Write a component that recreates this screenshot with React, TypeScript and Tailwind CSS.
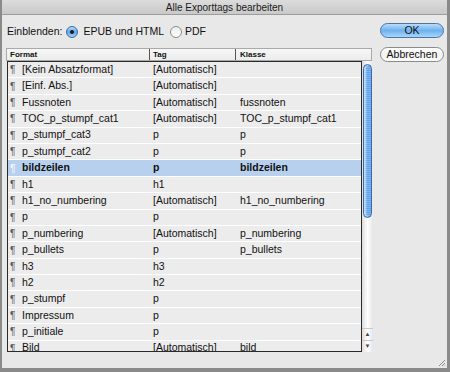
import React from "react";

type Row = { name: string; tag: string; klasse: string; selected?: boolean };

const rows: Row[] = [
  { name: "[Kein Absatzformat]", tag: "[Automatisch]", klasse: "" },
  { name: "[Einf. Abs.]", tag: "[Automatisch]", klasse: "" },
  { name: "Fussnoten", tag: "[Automatisch]", klasse: "fussnoten" },
  { name: "TOC_p_stumpf_cat1", tag: "[Automatisch]", klasse: "TOC_p_stumpf_cat1" },
  { name: "p_stumpf_cat3", tag: "p", klasse: "p" },
  { name: "p_stumpf_cat2", tag: "p", klasse: "p" },
  { name: "bildzeilen", tag: "p", klasse: "bildzeilen", selected: true },
  { name: "h1", tag: "h1", klasse: "" },
  { name: "h1_no_numbering", tag: "[Automatisch]", klasse: "h1_no_numbering" },
  { name: "p", tag: "p", klasse: "" },
  { name: "p_numbering", tag: "[Automatisch]", klasse: "p_numbering" },
  { name: "p_bullets", tag: "p", klasse: "p_bullets" },
  { name: "h3", tag: "h3", klasse: "" },
  { name: "h2", tag: "h2", klasse: "" },
  { name: "p_stumpf", tag: "p", klasse: "" },
  { name: "Impressum", tag: "p", klasse: "" },
  { name: "p_initiale", tag: "p", klasse: "" },
  { name: "Bild", tag: "[Automatisch]", klasse: "bild" },
];

const Radio = ({ checked }: { checked?: boolean }) =>
  checked ? (
    <span className="flex h-[12px] w-[12px] items-center justify-center rounded-full border border-[#3d6a9c] bg-gradient-to-b from-[#b8dcfa] via-[#5aa4e8] to-[#a6d4fa]">
      <span className="block h-[4px] w-[4px] rounded-full bg-[#1b1b1b]" />
    </span>
  ) : (
    <span className="block h-[12px] w-[12px] rounded-full border border-[#8c8c8c] bg-gradient-to-b from-[#ececec] to-white" />
  );

export default function App() {
  return (
    <div
      className="flex h-[372px] w-[450px] flex-col bg-[#8a8a8a] pb-[4px] pl-[2px] pr-[3px] text-[10px] text-[#111]"
      style={{ fontFamily: '"Liberation Sans", Arial, sans-serif' }}
    >
      {/* Title bar */}
      <div className="flex h-[15px] shrink-0 items-center justify-center border-b border-[#9c9c9c] bg-gradient-to-b from-[#dcdcdc] to-[#c9c9c9] text-[10px] text-[#1a1a1a]">
        Alle Exporttags bearbeiten
      </div>

      <div className="relative flex flex-1 bg-[#e8e8e8]">
        {/* Left column */}
        <div className="flex flex-col pl-[4px] pt-[10px]">
          <div className="flex h-[14px] items-center pl-[1px] text-[10.5px]">
            <span>Einblenden:</span>
            <span className="ml-[4px]">
              <Radio checked />
            </span>
            <span className="ml-[5px]">EPUB und HTML</span>
            <span className="ml-[6px]">
              <Radio />
            </span>
            <span className="ml-[3px]">PDF</span>
          </div>

          {/* Header */}
          <div className="mt-[9px] flex h-[13px] w-[366px] border border-[#a9a9a9] bg-gradient-to-b from-[#f7f7f7] to-[#ececec] text-[8px] font-bold">
            <div className="flex w-[143px] items-center border-r border-[#555] pl-[3px]">Format</div>
            <div className="flex w-[86px] items-center border-r border-[#555] pl-[3px]">Tag</div>
            <div className="flex flex-1 items-center pl-[4px]">Klasse</div>
          </div>

          {/* List */}
          <div className="flex h-[291px]">
            <div className="ml-[1px] w-[355px] overflow-hidden border border-[#2a2a2a] bg-[#ececec]">
              {rows.map((r) => (
                <div
                  key={r.name}
                  className={`flex h-[16.4px] items-center border-b border-white text-[10.5px] ${
                    r.selected ? "bg-[#b6d0ee] font-bold" : ""
                  }`}
                >
                  <div className="flex w-[142px] items-center pl-[2px]">
                    <span className={`w-[12px] text-[10px] ${r.selected ? "text-[#eef4fb]" : "text-[#555]"}`}>¶</span>
                    <span>{r.name}</span>
                  </div>
                  <div className="w-[87px] pl-[3px]">{r.tag}</div>
                  <div className="flex-1 pl-[3px]">{r.klasse}</div>
                </div>
              ))}
            </div>

            {/* Scrollbar */}
            <div className="flex w-[11px] flex-col bg-gradient-to-r from-[#dcdcdc] via-white to-[#e6e6e6]">
              <div className="mx-[1px] mt-[3px] h-[154px] rounded-full border border-[#3b6aa8] bg-[repeating-linear-gradient(0deg,#5e9fe6_0px,#5e9fe6_1px,#7fb6f0_1px,#7fb6f0_2px)] shadow-[inset_2px_0_2px_rgba(255,255,255,0.6)]" />
              <div className="flex-1" />
              <div className="flex h-[12px] items-center justify-center border-t border-[#c8c8c8] text-[6px] text-[#444]">▲</div>
              <div className="flex h-[12px] items-center justify-center border-t border-[#c8c8c8] text-[6px] text-[#444]">▼</div>
            </div>
          </div>
        </div>

        {/* Buttons */}
        <div className="ml-[7px] flex flex-col gap-[9px] pt-[8px]">
          <button className="h-[15px] w-[64px] rounded-full border border-[#4a76a6] bg-gradient-to-b from-[#b9dcfa] via-[#6eb1ee] to-[#a8d6fb] text-[10.5px] leading-none text-[#111]">
            OK
          </button>
          <button className="h-[15px] w-[64px] rounded-full border border-[#8a8a8a] bg-gradient-to-b from-white via-[#f2f2f2] to-[#fafafa] text-[10.5px] leading-none text-[#111]">
            Abbrechen
          </button>
        </div>

        {/* Resize grip */}
        <svg className="absolute bottom-[1px] right-[1px]" width="8" height="8" viewBox="0 0 8 8">
          <path d="M7 1L1 7M7 4L4 7M7 6.5L6.5 7" stroke="#8c8c8c" strokeWidth="1" />
        </svg>
      </div>
    </div>
  );
}
